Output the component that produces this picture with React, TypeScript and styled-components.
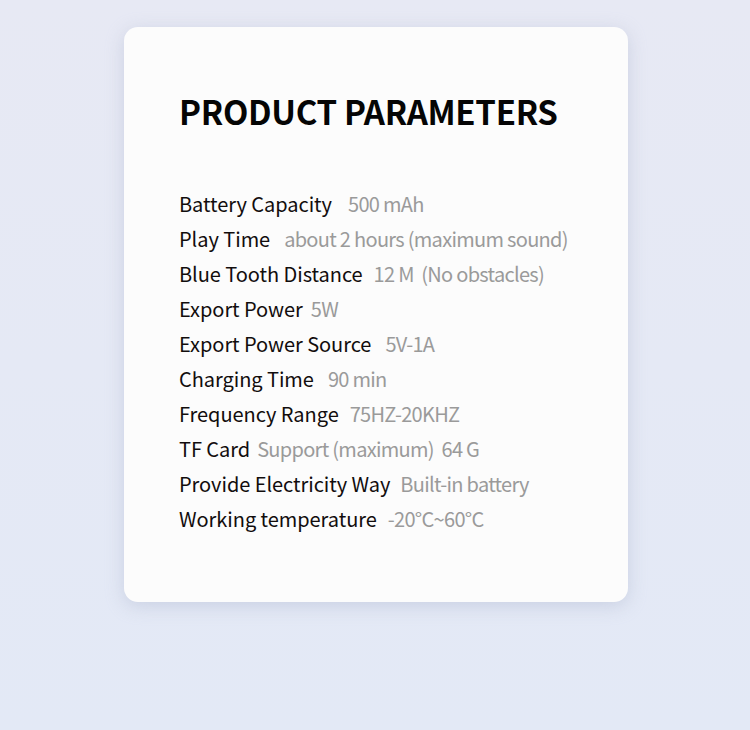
import React from 'react';
import styled, { createGlobalStyle } from 'styled-components';

const GlobalStyle = createGlobalStyle`
  html, body {
    margin: 0;
    padding: 0;
  }
  body {
    width: 750px;
    height: 730px;
    background: linear-gradient(180deg, #e7e9f4 0%, #e3e9f6 100%);
    font-family: "Noto Sans CJK SC", "Noto Sans", sans-serif;
  }
`;

const Page = styled.div`
  display: flex;
  justify-content: center;
  padding: 27px 0 0 2px;
`;

const Card = styled.section`
  width: 504px;
  height: 575px;
  box-sizing: border-box;
  padding: 68px 40px 0 55px;
  background: #fcfcfc;
  border-radius: 14px;
  box-shadow: 0 4px 18px rgba(170, 180, 205, 0.45);
`;

const Title = styled.h1`
  margin: 0;
  font-size: 33px;
  line-height: 1;
  font-weight: 700;
  color: #050505;
  letter-spacing: -0.3px;
`;

const List = styled.dl`
  margin: 58px 0 0;
  display: flex;
  flex-direction: column;
`;

const Row = styled.div<{ gap: number }>`
  display: flex;
  align-items: baseline;
  gap: ${({ gap }) => gap}px;
  height: 35px;
  font-size: 20px;
  line-height: 35px;
`;

const Label = styled.dt`
  margin: 0;
  color: #120d0d;
  font-weight: 400;
  letter-spacing: -0.05px;
`;

const Value = styled.dd`
  margin: 0;
  color: #9a9a9a;
  white-space: pre;
  letter-spacing: -0.7px;
`;

const params: { label: string; value: string; gap: number }[] = [
  { label: 'Battery Capacity', value: '500 mAh', gap: 16 },
  { label: 'Play Time', value: 'about 2 hours (maximum sound)', gap: 14 },
  { label: 'Blue Tooth Distance', value: '12 M  (No obstacles)', gap: 11 },
  { label: 'Export Power', value: '5W', gap: 8 },
  { label: 'Export Power Source', value: '5V-1A', gap: 14 },
  { label: 'Charging Time', value: '90 min', gap: 14 },
  { label: 'Frequency Range', value: '75HZ-20KHZ', gap: 11 },
  { label: 'TF Card', value: 'Support (maximum)  64 G', gap: 7 },
  { label: 'Provide Electricity Way', value: 'Built-in battery', gap: 10 },
  { label: 'Working temperature', value: '-20°C~60°C', gap: 11 },
];

export default function App() {
  return (
    <>
      <GlobalStyle />
      <Page>
        <Card>
          <Title>PRODUCT PARAMETERS</Title>
          <List>
            {params.map((p) => (
              <Row key={p.label} gap={p.gap}>
                <Label>{p.label}</Label>
                <Value>{p.value}</Value>
              </Row>
            ))}
          </List>
        </Card>
      </Page>
    </>
  );
}
